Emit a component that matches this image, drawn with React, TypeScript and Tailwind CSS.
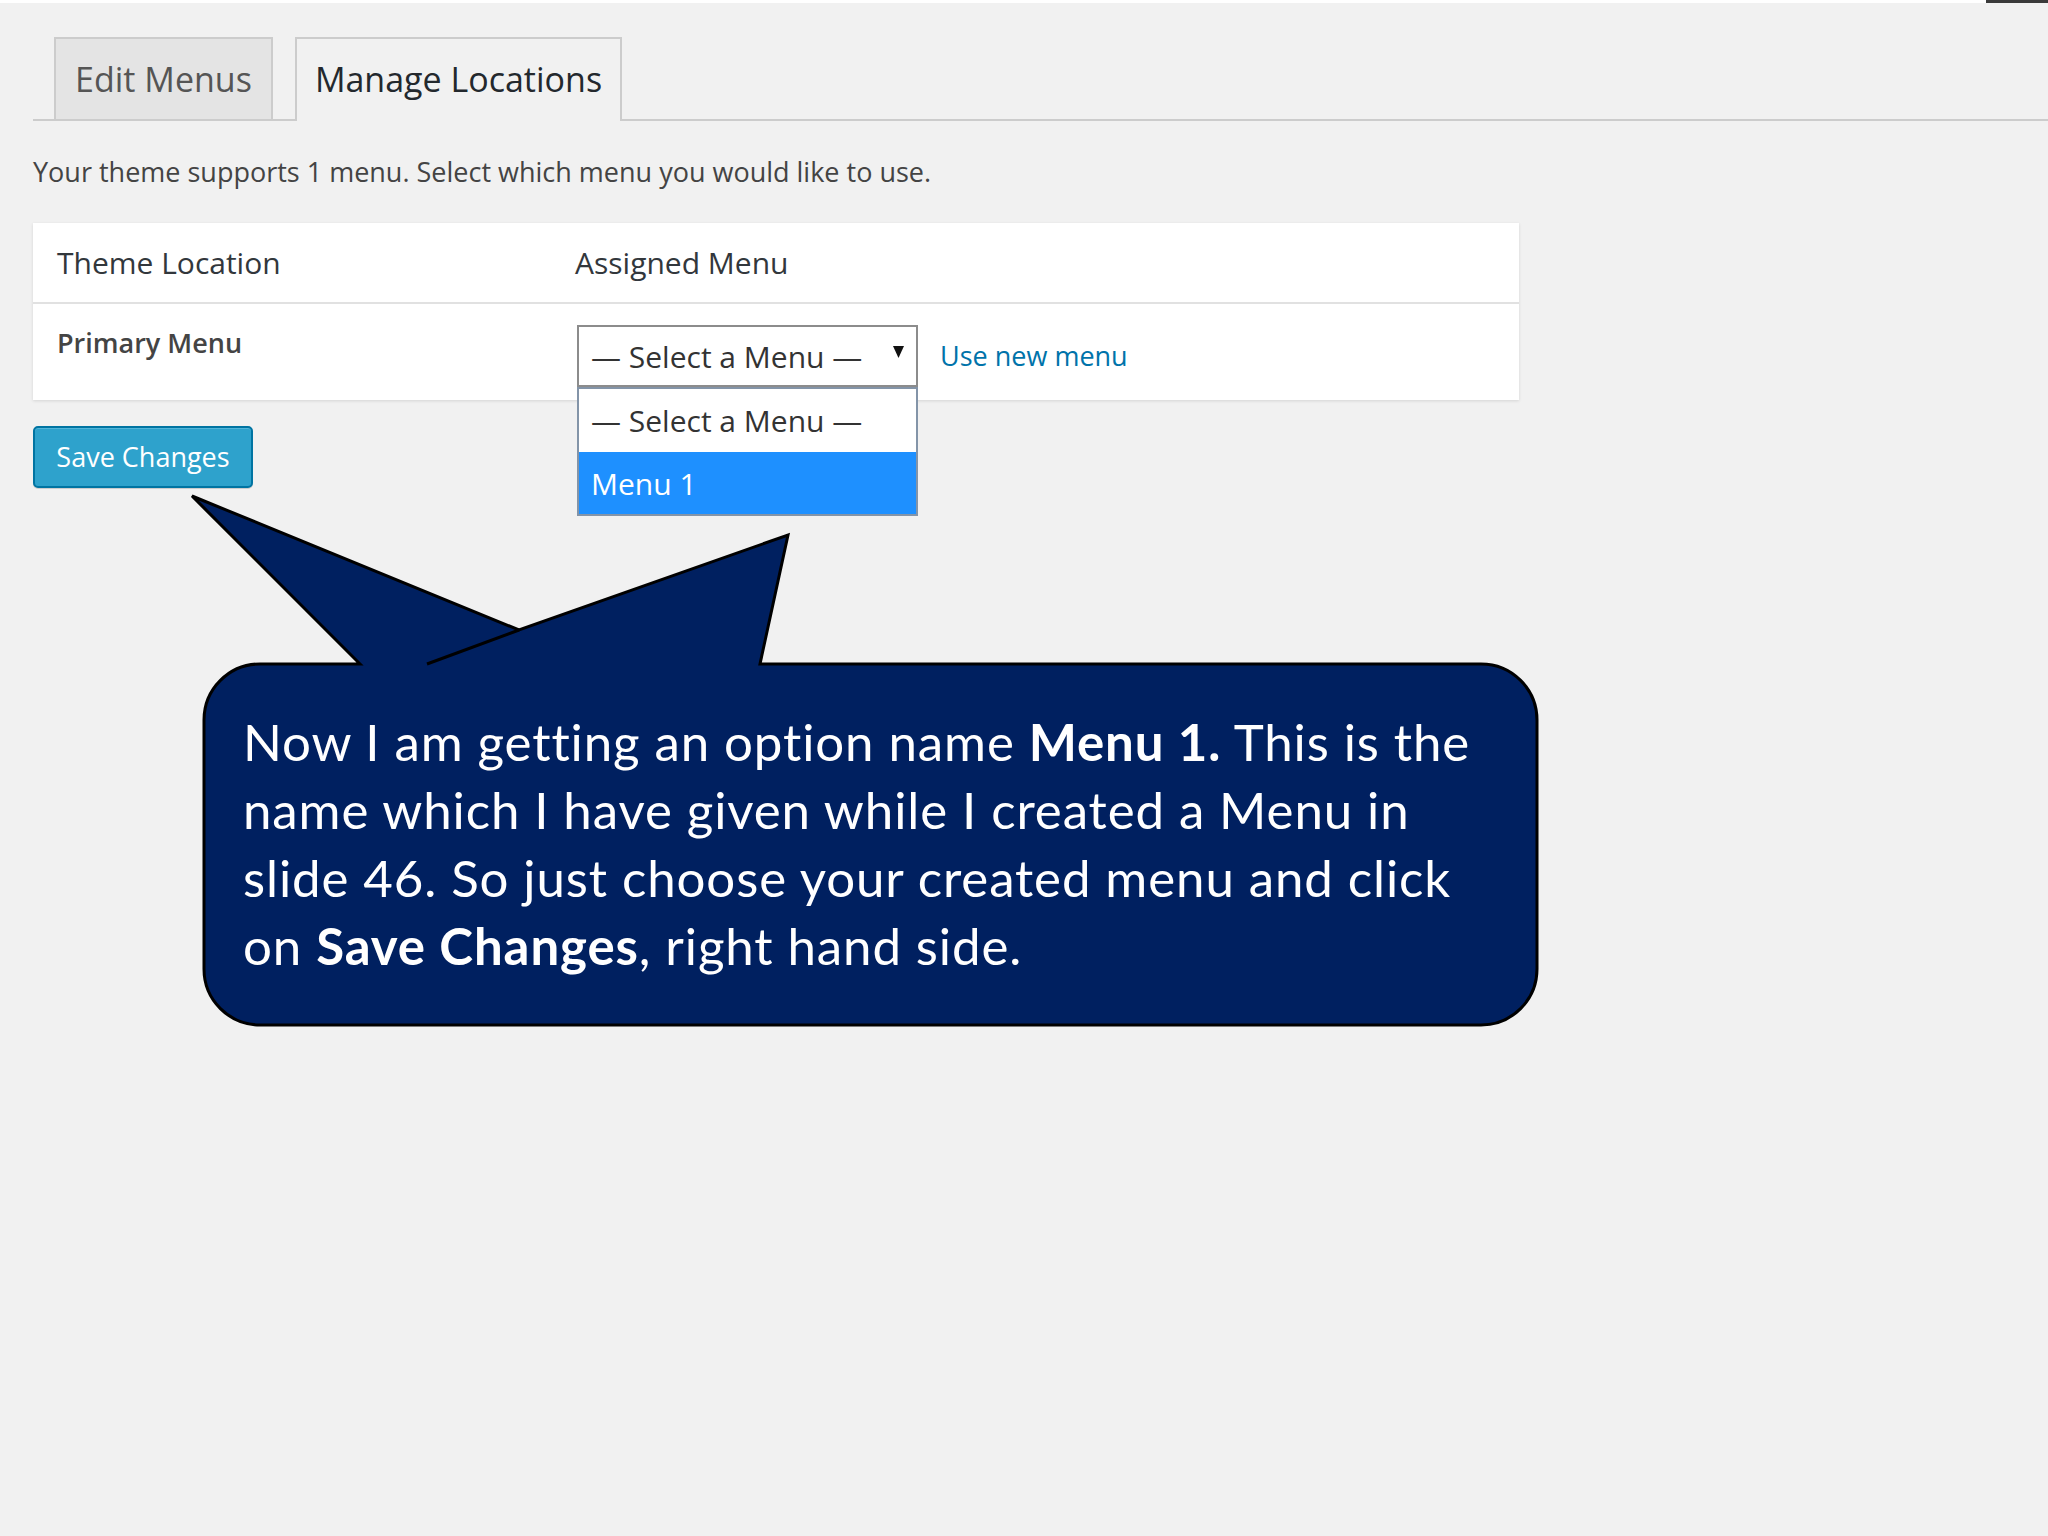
export default function App() {
  return (
    <div className="relative h-[1536px] w-[2048px] overflow-hidden bg-[#f1f1f1] font-['Open_Sans',sans-serif]">
      {/* top strip */}
      <div className="flex h-[3px] justify-end bg-white">
        <div className="w-[62px] bg-[#3a3a3a]" />
      </div>

      <div className="pl-[33px]">
        {/* Tabs */}
        <div className="mt-[34px] flex h-[84px] items-end gap-[22px] border-b-2 border-[#cccccc] pl-[21px]">
          <div className="flex h-[82px] w-[219px] items-center justify-center border-2 border-b-0 border-[#cccccc] bg-[#e4e4e4] text-[34px] text-[#555555]">
            Edit Menus
          </div>
          <div className="-mb-[2px] flex h-[84px] w-[327px] items-center justify-center border-2 border-b-0 border-[#cccccc] bg-[#f1f1f1] pb-[2px] text-[34px] text-[#23282d]">
            Manage Locations
          </div>
        </div>

        <p className="mt-[33px] text-[27px] leading-[36px] text-[#444444]">
          Your theme supports 1 menu. Select which menu you would like to use.
        </p>

        {/* Locations table */}
        <div className="mt-[33px] w-[1486px] bg-white shadow-[0_1px_3px_rgba(0,0,0,0.12)]">
          <div className="grid h-[81px] grid-cols-[542px_1fr] items-center border-b-2 border-[#e1e1e1] text-[30px] text-[#32373c]">
            <div className="pl-[24px]">Theme Location</div>
            <div>Assigned Menu</div>
          </div>
          <div className="grid h-[96px] grid-cols-[542px_1fr] items-start pt-[21px]">
            <div className="pl-[24px] text-[27px] font-semibold leading-[36px] text-[#444444]">
              Primary Menu
            </div>
            <div className="flex items-center">
              <div className="relative ml-[2px] flex h-[62px] w-[341px] items-center border-2 border-[#8c8c8c] bg-white pl-[12px] text-[30px] text-[#333333]">
                — Select a Menu —
                <svg
                  className="absolute right-[12px] top-[19px]"
                  width="11"
                  height="12"
                  viewBox="0 0 11 12"
                >
                  <path d="M0 0 H11 L5.5 12 Z" fill="#111111" />
                </svg>
                {/* open dropdown */}
                <div className="absolute -left-[2px] top-[60px] z-10 w-[341px] border-2 border-[#8394a8] bg-white">
                  <div className="flex h-[63px] items-center pl-[12px] text-[30px] text-[#333333]">
                    — Select a Menu —
                  </div>
                  <div className="flex h-[62px] items-center bg-[#1e90ff] pl-[12px] text-[30px] text-white">
                    Menu 1
                  </div>
                </div>
              </div>
              <a className="ml-[22px] text-[27px] text-[#0073aa]">Use new menu</a>
            </div>
          </div>
        </div>

        <button className="mt-[26px] flex h-[62px] w-[220px] items-center justify-center rounded-[5px] border-2 border-[#0074a2] bg-[#2ea2cc] text-[27px] text-white shadow-[inset_0_1px_0_rgba(120,200,230,0.5),0_1px_0_rgba(0,0,0,0.15)]">
          Save Changes
        </button>
      </div>

      {/* Callout annotation */}
      <svg
        className="pointer-events-none absolute left-[180px] top-[480px] z-20"
        width="1370"
        height="560"
        viewBox="180 480 1370 560"
      >
        <path
          d="M 360 664 L 192 496 L 519 630 L 788 535 L 760 664 L 1481 664 A 56 56 0 0 1 1537 720 L 1537 969 A 56 56 0 0 1 1481 1025 L 260 1025 A 56 56 0 0 1 204 969 L 204 720 A 56 56 0 0 1 260 664 Z"
          fill="#002060"
          stroke="#000000"
          strokeWidth="3"
          strokeLinejoin="miter"
        />
        <path d="M 519 630 L 427 664" stroke="#000000" strokeWidth="3" />
      </svg>
      <div className="absolute left-[243px] top-[708px] z-30 whitespace-nowrap font-['Lato',sans-serif] text-[51px] leading-[68px] tracking-[0.9px] text-white">
        Now I am getting an option name <b>Menu 1.</b> This is the
        <br />
        name which I have given while I created a Menu in
        <br />
        slide 46. So just choose your created menu and click
        <br />
        on <b>Save Changes</b>, right hand side.
      </div>
    </div>
  );
}
